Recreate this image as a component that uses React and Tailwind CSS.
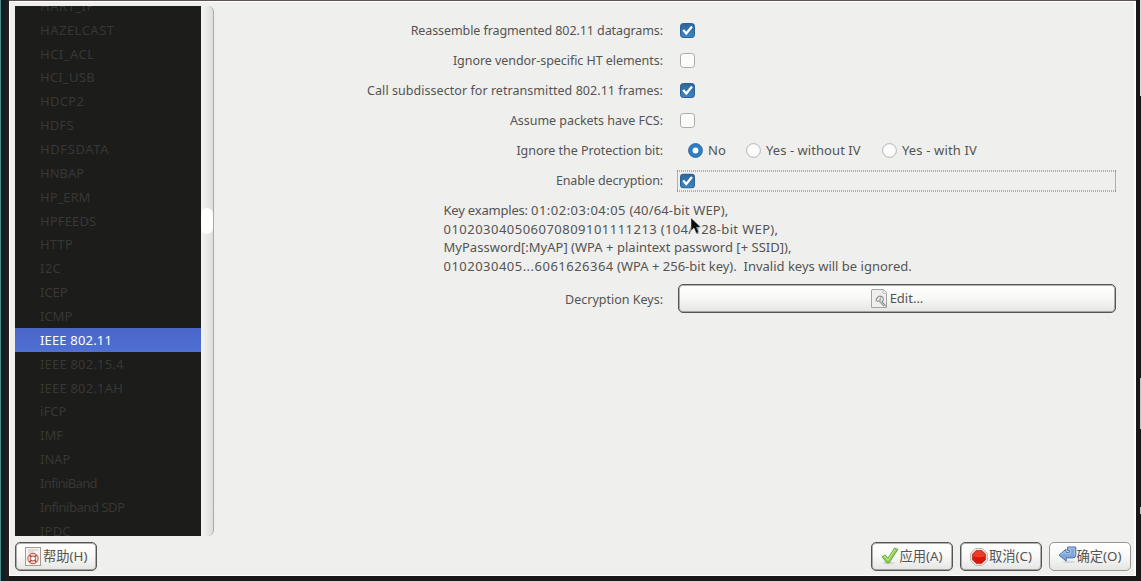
const protocols = [
  ["HART_IP", "tracking-[0.5px]"],
  ["HAZELCAST", "tracking-[0.5px]"],
  ["HCI_ACL", "tracking-[0.5px]"],
  ["HCI_USB", "tracking-[0.25px]"],
  ["HDCP2", "tracking-[0.3px]"],
  ["HDFS", "tracking-[0.2px]"],
  ["HDFSDATA", "tracking-[0.6px]"],
  ["HNBAP", ""],
  ["HP_ERM", ""],
  ["HPFEEDS", "tracking-[0.15px]"],
  ["HTTP", "tracking-[0.2px]"],
  ["I2C", "tracking-[0.3px]"],
  ["ICEP", ""],
  ["ICMP", ""],
  ["IEEE 802.11", "tracking-[0.17px]"],
  ["IEEE 802.15.4", "tracking-[0.2px]"],
  ["IEEE 802.1AH", "tracking-[0.2px]"],
  ["iFCP", "tracking-[0.1px]"],
  ["IMF", ""],
  ["INAP", ""],
  ["InfiniBand", "tracking-[-0.65px]"],
  ["Infiniband SDP", "tracking-[-0.45px]"],
  ["IPDC", "tracking-[0.2px]"],
];

function Checkbox({ checked }) {
  return (
    <svg className="block size-[15px]" viewBox="0 0 15 15">
      <defs>
        <linearGradient id="check-fill" x1="0" y1="0" x2="0" y2="1">
          <stop offset="0" stopColor="#2d659c" />
          <stop offset="1" stopColor="#3d86c2" />
        </linearGradient>
      </defs>
      <rect
        x="0.5" y="0.5" width="14" height="14" rx="2.8"
        fill={checked ? "url(#check-fill)" : "#fbfbfb"}
        stroke={checked ? "#2d5f8e" : "#aaaaa8"}
      />
      {checked && <path d="M3.2 7 6.3 10.4 12 3.6" fill="none" stroke="#fff" strokeWidth="2.3" />}
    </svg>
  );
}

function Radio({ checked }) {
  return (
    <svg className="block size-[15px] shrink-0" viewBox="0 0 15 15">
      <circle cx="7.5" cy="7.5" r="6.9" fill={checked ? "#2c7fc0" : "#fcfcfc"} stroke={checked ? "#2b6ba2" : "#b4b4b2"} strokeWidth="1" />
      {checked && <circle cx="7.5" cy="7.5" r="2.9" fill="#fff" />}
    </svg>
  );
}

function Label({ className = "", children }) {
  return (
    <div className={`w-[434px] shrink-0 pt-[3px] text-right text-[12.5px] whitespace-pre ${className}`}>{children}</div>
  );
}

function Row({ label, tracking, children }) {
  return (
    <div className="flex h-[30px] items-center">
      <Label className={tracking}>{label}</Label>
      <div className="flex flex-1 items-center pl-[17px]">{children}</div>
    </div>
  );
}

function Digits({ children }) {
  return <span className="tracking-[0.48px]">{children}</span>;
}

function HelpIcon() {
  return (
    <svg className="block h-[19px] w-[16px]" viewBox="0 0 16 19">
      <rect x="0.5" y="0.5" width="15" height="18" fill="#f6f3f0" stroke="#a39a94" />
      <path d="M3 3h10M3 5h6" stroke="#cbc4be" />
      <circle cx="8" cy="11.5" r="5.2" fill="#f2dcd6" stroke="#ad5a4d" />
      <circle cx="8" cy="11.5" r="2.5" fill="#fff" stroke="#b14a3c" />
      <path d="M4.5 8 6.4 9.9M11.5 8 9.6 9.9M4.5 15 6.4 13.1M11.5 15 9.6 13.1" stroke="#b14a3c" strokeWidth="1.5" />
    </svg>
  );
}

function EditIcon() {
  return (
    <svg className="block h-[19px] w-[17px]" viewBox="0 0 17 19">
      <path d="M1 .5h11.5l3 3v15H.5V1z" fill="#efefee" stroke="#a3a3a1" />
      <path d="M12 .8v3.4h3.5" fill="#fff" stroke="#b8b8b6" />
      <path d="M5.2 12.4q-.4-3.6 3-5.2 3.4-.5 4.2 2.2.2 2.2-1.4 3.6l4.4 4.4" fill="none" stroke="#8d8d8b" strokeWidth="1.1" />
      <path d="M5.8 12.4 9 11.6 9.6 8.4M8.5 12.2l4.5 5" fill="none" stroke="#a9a9a7" strokeWidth="1.5" />
    </svg>
  );
}

function ApplyIcon() {
  return (
    <svg className="-mt-px block size-[18px]" viewBox="0 0 18 18">
      <ellipse cx="8" cy="16" rx="6" ry="1.4" fill="#d4d8d0" />
      <path d="M1 9.6 4.3 8l2.6 3.3L13.6 1l3.3 1.4L8.2 15.8l-2.4.2z" fill="#8fd052" stroke="#5b9a32" strokeWidth=".8" strokeLinejoin="round" />
      <path d="M2.7 9.8 4 9.2l2.9 3.9L14 2.4" fill="none" stroke="#c4ec9d" />
    </svg>
  );
}

function CancelIcon() {
  return (
    <svg className="block size-[18px]" viewBox="0 0 18 18">
      <path d="M5.5.6h7l4.9 4.9v7l-4.9 4.9h-7L.6 12.5v-7z" fill="#f6f1ee" stroke="#aaa19d" strokeWidth=".8" />
      <path d="M6.2 2.4h5.6l3.8 3.8v5.6l-3.8 3.8H6.2l-3.8-3.8V6.2z" fill="#d9180e" stroke="#a9170f" strokeWidth=".6" />
      <path d="M6.4 3.1h5.2L14.9 6.4v2.2Q9 9.8 3.1 8.6V6.4z" fill="#ee3c26" />
    </svg>
  );
}

function OkIcon() {
  return (
    <svg className="-mt-1 block h-[18px] w-[19px]" viewBox="0 0 19 18">
      <ellipse cx="11" cy="15.8" rx="6.5" ry="1.3" fill="#d3d7dc" />
      <path d="M1 9.2 8 3.2v3.1h3.3V4.5H9.6V1h8.2v8.2q0 2.7-2.7 2.7H8.2V15z" fill="#7fa9da" stroke="#42689b" strokeWidth=".9" strokeLinejoin="round" />
      <path d="M2.7 9.1 7 5.4v2h5.6V3.4h-1.8v-1.2h5.7v7" fill="none" stroke="#b3cdea" strokeWidth=".8" />
    </svg>
  );
}

function Button({ icon, children, className = "" }) {
  return (
    <button
      className={`flex h-[29px] items-center rounded-[5px] border bg-linear-to-b from-white via-[#f8f8f7] to-[#e4e4e2] leading-none ${className}`}
    >
      {icon}
      <span>{children}</span>
    </button>
  );
}

const strong = "border-[#555553] inset-ring inset-ring-[#555553]/45";

export default function App() {
  return (
    <div className="relative flex h-[581px] w-[1141px] overflow-hidden bg-[#1a1718] font-['Noto_Sans','Noto_Sans_CJK_SC',sans-serif] text-[13px] text-[#545452]">
      <div className="w-[9px] shrink-0 border-l border-[#4b8a8e] bg-linear-to-r from-[#071e22] to-[#231f21]" />
      <div className="flex h-[576px] w-[1127px] shrink-0 flex-col border-t border-[#5c5456]">
        <div className="flex h-full flex-col border border-r-2 border-white bg-[#efefee] pt-1 pl-[5px]">
          <div className="flex h-[530px]">
            <div className="h-full w-[186px] shrink-0 overflow-hidden bg-[#1c1c1a]">
              <ul className="-mt-[11.8px]">
                {protocols.map(([name, tracking]) => (
                  <li
                    key={name}
                    className={`flex h-[23.87px] items-center pt-px pl-[25px] whitespace-pre ${tracking} ${
                      name === "IEEE 802.11" ? "bg-linear-to-b from-[#4965c8] to-[#5070d3] text-white" : "text-[#373735]"
                    }`}
                  >
                    {name}
                  </li>
                ))}
              </ul>
            </div>
            <div className="flex h-full w-[13px] shrink-0 flex-col rounded-[6px] border-r border-[#a9a9a7] bg-linear-to-r from-[#f4f4f3] to-[#dededc] pt-[202px]">
              <div className="h-[26px] w-[12px] rounded-full bg-white" />
            </div>

            <div className="ml-[15px] flex flex-1 flex-col pt-[9px] pr-[19px]">
              <Row label="Reassemble fragmented 802.11 datagrams:" tracking="tracking-[-0.09px]"><Checkbox checked /></Row>
              <Row label="Ignore vendor-specific HT elements:" tracking="tracking-[-0.05px]"><Checkbox /></Row>
              <Row label="Call subdissector for retransmitted 802.11 frames:" tracking="tracking-[0.05px]"><Checkbox checked /></Row>
              <Row label="Assume packets have FCS:" tracking="tracking-[-0.03px]"><Checkbox /></Row>
              <Row label="Ignore the Protection bit:" tracking="tracking-[-0.04px]">
                <div className="flex items-center pl-2">
                  <div className="flex w-[58px] items-center gap-[5px]"><Radio checked /><span className="pt-px">No</span></div>
                  <div className="flex w-[136px] items-center gap-[5px] tracking-[0.06px]"><Radio /><span className="pt-px">Yes - without IV</span></div>
                  <div className="flex items-center gap-[5px] tracking-[0.15px]"><Radio /><span className="pt-px">Yes - with IV</span></div>
                </div>
              </Row>
              <div className="flex h-[30px] items-center">
                <Label className="tracking-[-0.12px]">Enable decryption:</Label>
                <div className="ml-[14px] flex h-[21px] flex-1 translate-y-[0.5px] items-center border border-dotted border-[#70706e] pl-[2px]">
                  <Checkbox checked />
                </div>
              </div>
              <div className="mt-[6px] pl-[214.5px] leading-[18.6px] whitespace-pre">
                <div><span className="tracking-[-0.2px]">Key examples: </span><Digits>01:02:03:04:05</Digits> <span className="tracking-[0.15px]">(40/64-bit WEP),</span></div>
                <div><Digits>010203040506070809101111213</Digits> <span className="tracking-[0.35px]">(104/128-bit WEP),</span></div>
                <div className="tracking-[0.02px]">MyPassword[:MyAP] (WPA + plaintext password [+ SSID]),</div>
                <div><Digits>0102030405...6061626364</Digits> (WPA + 256-bit key).  Invalid keys will be ignored.</div>
              </div>
              <div className="mt-[8px] flex h-[30px] items-center">
                <Label>Decryption Keys:</Label>
                <Button icon={<EditIcon />} className={`ml-[15px] w-[438px] justify-center gap-[2px] ${strong}`}>Edit...</Button>
              </div>
            </div>
          </div>

          <div className="mt-[6px] flex items-center pr-[3px] text-[13.3px]">
            <Button icon={<HelpIcon />} className={`w-[82px] gap-[2px] pl-[9px] ${strong}`}>帮助(H)</Button>
            <div className="ml-auto flex gap-[7px]">
              <Button icon={<ApplyIcon />} className={`w-[82px] gap-px pl-[8.5px] ${strong}`}>应用(A)</Button>
              <Button icon={<CancelIcon />} className={`w-[82px] gap-px pl-[9px] ${strong}`}>取消(C)</Button>
              <Button icon={<OkIcon />} className="w-[82px] border-[#969694] pl-[7.5px]">确定(O)</Button>
            </div>
          </div>
        </div>
      </div>
      <div className="flex flex-1 flex-col items-end">
        <div className="h-[96px] w-px bg-[#d8d8d8]" />
        <div className="mt-[282px] h-[51px] w-px bg-[#c4c4c4]" />
        <div className="mt-[78px] h-[7px] w-px bg-[#c4c4c4]" />
      </div>

      <svg className="absolute top-[217px] left-[690px] h-[18px] w-[13px]" viewBox="0 0 13 18">
        <path d="M1 .8v13l3-2.8 2.2 5.4 2.6-1.1-2.2-5h4.3z" fill="#0d0d0d" stroke="#e8e8e8" strokeWidth=".5" />
      </svg>
    </div>
  );
}
